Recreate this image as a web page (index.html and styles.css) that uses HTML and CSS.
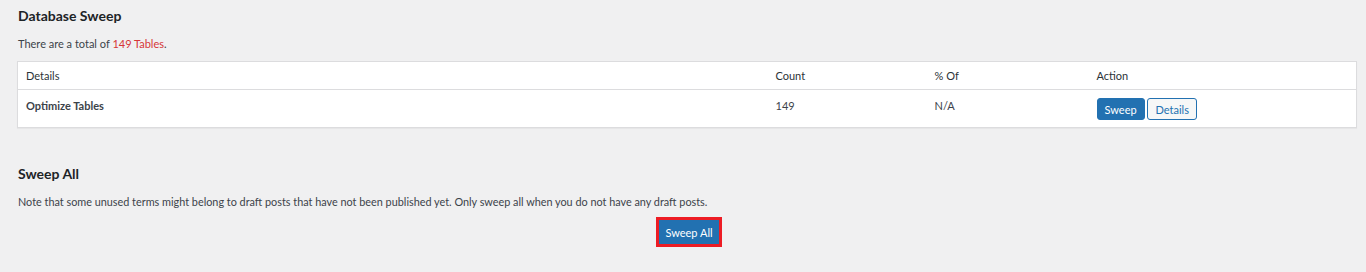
FILE: index.html
```html
<!DOCTYPE html>
<html lang="en">
<head>
    <meta charset="UTF-8">
    <title>Database Sweep</title>
    <link rel="stylesheet" href="styles.css">
</head>
<body>
    <div class="wrap">
        <h3 class="title">Database Sweep</h3>
        <p class="total">There are a total of <span class="hl">149 Tables</span>.</p>
        <table class="sweep-table">
            <thead>
                <tr>
                    <th class="col-details">Details</th>
                    <th class="col-count">Count</th>
                    <th class="col-pct">% Of</th>
                    <th class="col-action">Action</th>
                </tr>
            </thead>
            <tbody>
                <tr>
                    <td><strong>Optimize Tables</strong></td>
                    <td>149</td>
                    <td>N/A</td>
                    <td>
                        <button class="btn btn-primary">Sweep</button>
                        <button class="btn btn-secondary">Details</button>
                    </td>
                </tr>
            </tbody>
        </table>

        <h3 class="title title-all">Sweep All</h3>
        <p class="note">Note that some unused terms might belong to draft posts that have not been published yet. Only sweep all when you do not have any draft posts.</p>
        <div class="all-box">
            <span class="mark"><button class="btn btn-primary btn-all">Sweep All</button></span>
        </div>
    </div>
</body>
</html>
```

FILE: styles.css
```css
* {
    padding: 0;
    margin: 0;
    box-sizing: border-box;
}

body {
    background-color: #f0f0f1;
    font: 11px Lato, "Liberation Sans", sans-serif;
    color: #3c434a;
}

.wrap {
    padding: 7px 9px 0 17px;
}

.title {
    font-size: 14px;
    font-weight: 700;
    line-height: 18px;
    color: #1d2327;
    padding-left: 1px;
}

.total {
    margin-top: 11px;
    line-height: 16px;
    padding-left: 1px;
}

.hl {
    color: #d63638;
}

.sweep-table {
    margin-top: 9px;
    width: 100%;
    border-collapse: collapse;
    border-spacing: 0;
    background-color: #fff;
    border: 1px solid #dcdcde;
    box-shadow: 0 1px 1px rgba(0, 0, 0, .04);
}

th,
td {
    text-align: left;
    vertical-align: top;
    line-height: 16px;
    padding: 8px;
}

th {
    font-weight: 400;
    color: #2c3338;
    padding-top: 6px;
    padding-bottom: 5px;
    border-bottom: 1px solid #dcdcde;
}

td {
    padding-bottom: 7px;
}

td strong {
    font-weight: 700;
}

.col-details {
    width: 750px;
}

.col-count {
    width: 159px;
}

.col-pct {
    width: 162px;
}

.btn {
    font: 11px Lato, "Liberation Sans", sans-serif;
    height: 22px;
    padding: 0 7px;
    border-radius: 3px;
    cursor: pointer;
    vertical-align: top;
}

.btn-primary {
    background-color: #2271b1;
    border: 1px solid #2271b1;
    color: #fff;
}

.btn-secondary {
    background-color: #f6f7f7;
    border: 1px solid #2271b1;
    color: #2271b1;
}

.title-all {
    margin-top: 37px;
}

.note {
    margin-top: 11px;
    font-size: 10.85px;
    line-height: 16px;
    padding-left: 1px;
}

.all-box {
    margin-top: 7px;
    text-align: center;
    padding-left: 4px;
}

.mark {
    display: inline-block;
    border: 3px solid #ed1c24;
}

.btn-all {
    height: 24px;
    border-radius: 0;
    padding: 0 5px;
    display: block;
}
```
